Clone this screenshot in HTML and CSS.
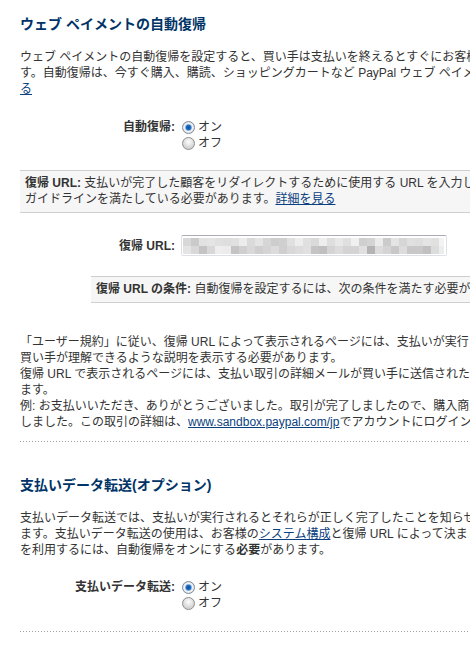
FILE: index.html
```html
<!DOCTYPE html>
<html lang="ja">
<head>
  <meta charset="UTF-8"/>
  <meta name="viewport" content="width=device-width, initial-scale=1"/>
  <title>ウェブ ペイメントの設定</title>
  <link rel="stylesheet" href="styles.css">
</head>
<body>
  <div class="page">
    <section class="section">
      <h2 class="section-title">ウェブ ペイメントの自動復帰</h2>
      <p class="text">
        ウェブ ペイメントの自動復帰を設定すると、買い手は支払いを終えるとすぐにお客様のウェブサイトに戻ることができま<br>
        す。自動復帰は、今すぐ購入、購読、ショッピングカートなど PayPal ウェブ ペイメントのボタンに適用されます。<a href="#">詳細を見<br>る</a>
      </p>

      <div class="field">
        <span class="field-label">自動復帰:</span>
        <div class="choices">
          <label class="choice"><span class="radio checked"></span>オン</label>
          <label class="choice"><span class="radio"></span>オフ</label>
        </div>
      </div>

      <div class="note">
        <b>復帰 URL:</b> 支払いが完了した顧客をリダイレクトするために使用する URL を入力してください。このページは PayPal の<br>
        ガイドラインを満たしている必要があります。<a href="#">詳細を見る</a>
      </div>

      <div class="field field-url">
        <span class="field-label">復帰 URL:</span>
        <div class="url-input"><div class="url-blur"></div></div>
      </div>

      <div class="note note-sub">
        <b>復帰 URL の条件:</b> 自動復帰を設定するには、次の条件を満たす必要があります。
      </div>

      <p class="text rules">
        「ユーザー規約」に従い、復帰 URL によって表示されるページには、支払いが実行され、取引が完了したことについて、<br>
        買い手が理解できるような説明を表示する必要があります。<br>
        復帰 URL で表示されるページには、支払い取引の詳細メールが買い手に送信されたことを表示する必要があり<br>
        ます。<br>
        例: お支払いいただき、ありがとうございました。取引が完了しましたので、購入商品の領収書をメールで送信いた<br>
        しました。この取引の詳細は、<a href="#">www.sandbox.paypal.com/jp</a>でアカウントにログインしてご確認ください。
      </p>
    </section>

    <div class="divider"></div>

    <section class="section">
      <h2 class="section-title">支払いデータ転送(オプション)</h2>
      <p class="text">
        支払いデータ転送では、支払いが実行されるとそれらが正しく完了したことを知らせる通知をお客様に送信でき<br>
        ます。支払いデータ転送の使用は、お客様の<a href="#">システム構成</a>と復帰 URL によって決まります。支払いデータ転送<br>
        を利用するには、自動復帰をオンにする<b>必要</b>があります。
      </p>

      <div class="field">
        <span class="field-label">支払いデータ転送:</span>
        <div class="choices">
          <label class="choice"><span class="radio checked"></span>オン</label>
          <label class="choice"><span class="radio"></span>オフ</label>
        </div>
      </div>
    </section>

    <div class="divider"></div>
  </div>
</body>
</html>
```

FILE: styles.css
```css
/* COLORS */
:root {
  --text: #333;
  --title: #003366;
  --link: #0b3f80;
  --note-bg: #f6f6f6;
  --note-border: #cfcfcf;
  --dots: #a0a0a0;
}

/* RESET */
* { box-sizing:border-box; margin:0; padding:0 }
html, body {
  overflow:hidden;
  background:#fff;
  color:var(--text);
  font-family:"Liberation Sans","Noto Sans CJK JP",sans-serif;
  font-size:12px;
  line-height:16px;
}

.page {
  width:1000px;
  padding-left:20px;
}

/* SECTIONS */
.section { padding:34px 0 20px; }
.section:first-child { padding:15px 0 11px; }

.section-title {
  font-size:14px;
  line-height:18px;
  font-weight:bold;
  color:var(--title);
}

.text {
  margin-top:16px;
  white-space:nowrap;
}
.text a, .note a { color:var(--link); }

.rules { margin-top:31px; }

/* FORM ROWS */
.field {
  display:grid;
  grid-template-columns:155px auto;
  column-gap:6px;
  align-items:start;
  margin-top:22px;
}
.section:last-of-type .field { margin-top:21px; }
.field-label {
  text-align:right;
  font-weight:bold;
  white-space:nowrap;
}
.choices { display:flex; flex-direction:column; }
.choice {
  display:flex;
  align-items:center;
  gap:3px;
  height:16px;
}

.radio {
  width:13px; height:13px;
  margin-left:1px;
  border-radius:50%;
  border:1px solid #8d8d8d;
  background:radial-gradient(circle at 50% 35%, #fff 0, #f0f0f0 2px, #d4d4d4 6px);
}
.radio.checked {
  border-color:#7a8a9c;
  background:radial-gradient(circle at 50% 50%, #0c4f9e 0, #1f6fc4 2.4px, #9fc0e4 3.2px, #f4f4f4 4px, #dcdcdc 6px);
}

/* GRAY NOTES */
.note {
  margin-top:19px;
  padding:4px 5px 5px;
  background:var(--note-bg);
  border-top:1px solid var(--note-border);
  border-bottom:1px solid var(--note-border);
  white-space:nowrap;
}
.note-sub {
  margin-top:20px;
  margin-left:71px;
}

/* URL INPUT */
.field-url { align-items:center; }
.url-input {
  width:266px; height:21px;
  border:1px solid #dde1e7;
  border-top-color:#abadb3;
  border-radius:2px;
  padding:2px 2px 1px 1px;
}
.url-blur {
  height:16px;
  background:
    linear-gradient(to right,
      #d8d8d8 0 8px, #cacaca 8px 16px, #e2e2e2 16px 24px, #e4e4e4 24px 32px,
      #e0e0e0 32px 40px, #dedede 40px 48px, #e0e0e0 48px 56px, #ececec 56px 64px,
      #dadada 64px 72px, #e4e4e4 72px 80px, #d6d6d6 80px 88px, #cdcdcd 88px 96px,
      #d0d0d0 96px 104px, #e0e0e0 104px 112px, #ededed 112px 120px, #e0e0e0 120px 128px,
      #dadada 128px 136px, #eeeeee 136px 144px, #dedede 144px 152px, #e8e8e8 152px 160px,
      #e0e0e0 160px 168px, #f0f0f0 168px 176px, #cfcfcf 176px 184px, #d4d4d4 184px 192px,
      #ebebeb 192px 200px, #cbcbcb 200px 208px, #e4e4e4 208px 216px, #d6d6d6 216px 224px,
      #e0e0e0 224px 232px, #dedede 232px 240px, #e4e4e4 240px 248px, #e0e0e0 248px 256px,
      #f3f3f3 256px 264px) top / 100% 8px no-repeat,
    linear-gradient(to right,
      #e4e4e4 0 8px, #d8d8d8 8px 16px, #c4c4c4 16px 24px, #d8d8d8 24px 32px,
      #eeeeee 32px 40px, #ececec 40px 48px, #c4c4c4 48px 56px, #cfcfcf 56px 64px,
      #d8d8d8 64px 72px, #cfcfcf 72px 80px, #d4d4d4 80px 88px, #dcdcdc 88px 96px,
      #cfcfcf 96px 104px, #d8d8d8 104px 112px, #dcdcdc 112px 120px, #e0e0e0 120px 128px,
      #c4c4c4 128px 136px, #c0c0c0 136px 144px, #d4d4d4 144px 152px, #dcdcdc 152px 160px,
      #d4d4d4 160px 168px, #d4d4d4 168px 176px, #e0e0e0 176px 184px, #b4b4b4 184px 192px,
      #dcdcdc 192px 200px, #d4d4d4 200px 208px, #c8c8c8 208px 216px, #dcdcdc 216px 224px,
      #c8c8c8 224px 232px, #c8c8c8 232px 240px, #c0c0c0 240px 248px, #dcdcdc 248px 256px,
      #ececec 256px 264px) bottom / 100% 8px no-repeat;
}

/* DOTTED RULE */
.divider {
  height:1px;
  background:linear-gradient(to right, var(--dots) 1px, transparent 1px) 0 0 / 3px 1px repeat-x;
}
```
